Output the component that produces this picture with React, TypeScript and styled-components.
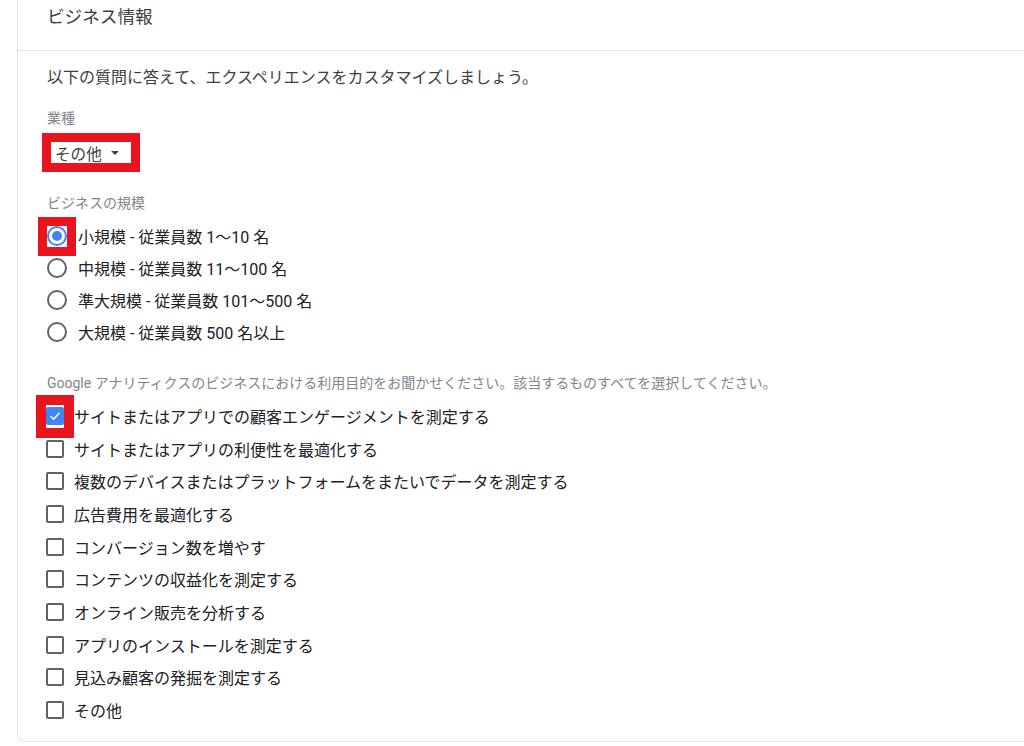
import React from "react";
import styled, { createGlobalStyle, css } from "styled-components";

const Global = createGlobalStyle`
  html, body { margin: 0; padding: 0; background: #ffffff; }
  body { font-family: Roboto, "Noto Sans CJK JP", sans-serif; overflow: hidden; }
`;

const RED = "#e8141e";
const BLUE = "#4285f4";

const Page = styled.div`
  width: 1024px;
  height: 746px;
  padding-left: 17px;
  box-sizing: border-box;
  overflow: hidden;
`;

const Card = styled.section`
  width: 1040px;
  border-left: 1px solid #e3e3e3;
  border-bottom: 1px solid #e3e3e3;
  border-bottom-left-radius: 8px;
  background: #fff;
`;

const Header = styled.header`
  height: 50px;
  border-bottom: 1px solid #e3e3e3;
  display: flex;
  align-items: flex-start;
  padding-left: 29px;
`;

const Title = styled.h2`
  margin: 5px 0 0 0;
  font-size: 17.6px;
  line-height: 24px;
  font-weight: 400;
  color: #3c4043;
`;

const Body = styled.div`
  display: flex;
  flex-direction: column;
  align-items: flex-start;
  padding: 15px 0 15px 29px;
`;

const Intro = styled.p`
  margin: 0;
  font-size: 16px;
  line-height: 24px;
  color: #3c4043;
`;

const FieldLabel = styled.div<{ $top: number }>`
  margin-top: ${(p) => p.$top}px;
  font-size: 14px;
  line-height: 18px;
  color: #80868b;
`;

const highlight = (t: number, r: number, b: number, l: number, w: number) => css`
  &::after {
    content: "";
    position: absolute;
    top: -${t}px;
    right: -${r}px;
    bottom: -${b}px;
    left: -${l}px;
    border: ${w}px solid ${RED};
    pointer-events: none;
  }
`;

const Dropdown = styled.button`
  position: relative;
  margin: 15px 0 0 4px;
  width: 80px;
  height: 21px;
  padding: 0 0 0 4px;
  border: none;
  background: #fff;
  display: flex;
  align-items: center;
  gap: 9px;
  font-family: inherit;
  font-size: 15.6px;
  color: #3c4043;
  cursor: pointer;
  ${highlight(9, 9, 9, 9, 9)}
`;

const Caret = styled.span`
  width: 0;
  height: 0;
  margin-top: 1px;
  border-left: 4px solid transparent;
  border-right: 4px solid transparent;
  border-top: 4px solid #3c4043;
`;

const RadioGroup = styled.div`
  margin-top: 8px;
  display: flex;
  flex-direction: column;
`;

const RadioRow = styled.label`
  height: 32px;
  display: flex;
  align-items: center;
  gap: 11px;
  font-size: 16px;
  color: #202124;
`;

const Radio = styled.span<{ $checked?: boolean; $marked?: boolean }>`
  position: relative;
  box-sizing: border-box;
  width: 20px;
  height: 20px;
  border-radius: 50%;
  border: 2px solid ${(p) => (p.$checked ? BLUE : "#5f6368")};
  display: flex;
  align-items: center;
  justify-content: center;
  flex-shrink: 0;
  &::before {
    content: "";
    width: 10px;
    height: 10px;
    border-radius: 50%;
    background: ${(p) => (p.$checked ? BLUE : "transparent")};
  }
  ${(p) => p.$marked && highlight(11, 11, 12, 11, 9)}
`;

const CheckGroup = styled.div`
  margin-top: 7.7px;
  display: flex;
  flex-direction: column;
`;

const CheckRow = styled.label`
  height: 32.67px;
  display: flex;
  align-items: center;
  gap: 10px;
  font-size: 16px;
  color: #202124;
`;

const Box = styled.span<{ $checked?: boolean; $marked?: boolean }>`
  position: relative;
  box-sizing: border-box;
  width: 18px;
  height: 18px;
  margin-left: -1px;
  border-radius: 2px;
  border: 2px solid ${(p) => (p.$checked ? BLUE : "#5f6368")};
  background: ${(p) => (p.$checked ? BLUE : "#fff")};
  display: flex;
  align-items: center;
  justify-content: center;
  flex-shrink: 0;
  ${(p) => p.$marked && highlight(14, 12, 15, 12, 10)}
`;

const sizes = [
  "小規模 - 従業員数 1〜10 名",
  "中規模 - 従業員数 11〜100 名",
  "準大規模 - 従業員数 101〜500 名",
  "大規模 - 従業員数 500 名以上",
];

const goals = [
  "サイトまたはアプリでの顧客エンゲージメントを測定する",
  "サイトまたはアプリの利便性を最適化する",
  "複数のデバイスまたはプラットフォームをまたいでデータを測定する",
  "広告費用を最適化する",
  "コンバージョン数を増やす",
  "コンテンツの収益化を測定する",
  "オンライン販売を分析する",
  "アプリのインストールを測定する",
  "見込み顧客の発掘を測定する",
  "その他",
];

export default function App() {
  return (
    <>
      <Global />
      <Page>
        <Card>
          <Header>
            <Title>ビジネス情報</Title>
          </Header>
          <Body>
            <Intro>以下の質問に答えて、エクスペリエンスをカスタマイズしましょう。</Intro>
            <FieldLabel $top={19}>業種</FieldLabel>
            <Dropdown type="button">
              その他
              <Caret />
            </Dropdown>
            <FieldLabel $top={31}>ビジネスの規模</FieldLabel>
            <RadioGroup>
              {sizes.map((s, i) => (
                <RadioRow key={s}>
                  <Radio $checked={i === 0} $marked={i === 0} />
                  {s}
                </RadioRow>
              ))}
            </RadioGroup>
            <FieldLabel $top={26}>
              Google アナリティクスのビジネスにおける利用目的をお聞かせください。該当するものすべてを選択してください。
            </FieldLabel>
            <CheckGroup>
              {goals.map((g, i) => (
                <CheckRow key={g}>
                  <Box $checked={i === 0} $marked={i === 0}>
                    {i === 0 && (
                      <svg width="14" height="14" viewBox="0 0 24 24">
                        <path
                          d="M4.5 12.5l5 5L19.5 7"
                          fill="none"
                          stroke="#fff"
                          strokeWidth="2.6"
                        />
                      </svg>
                    )}
                  </Box>
                  {g}
                </CheckRow>
              ))}
            </CheckGroup>
          </Body>
        </Card>
      </Page>
    </>
  );
}
